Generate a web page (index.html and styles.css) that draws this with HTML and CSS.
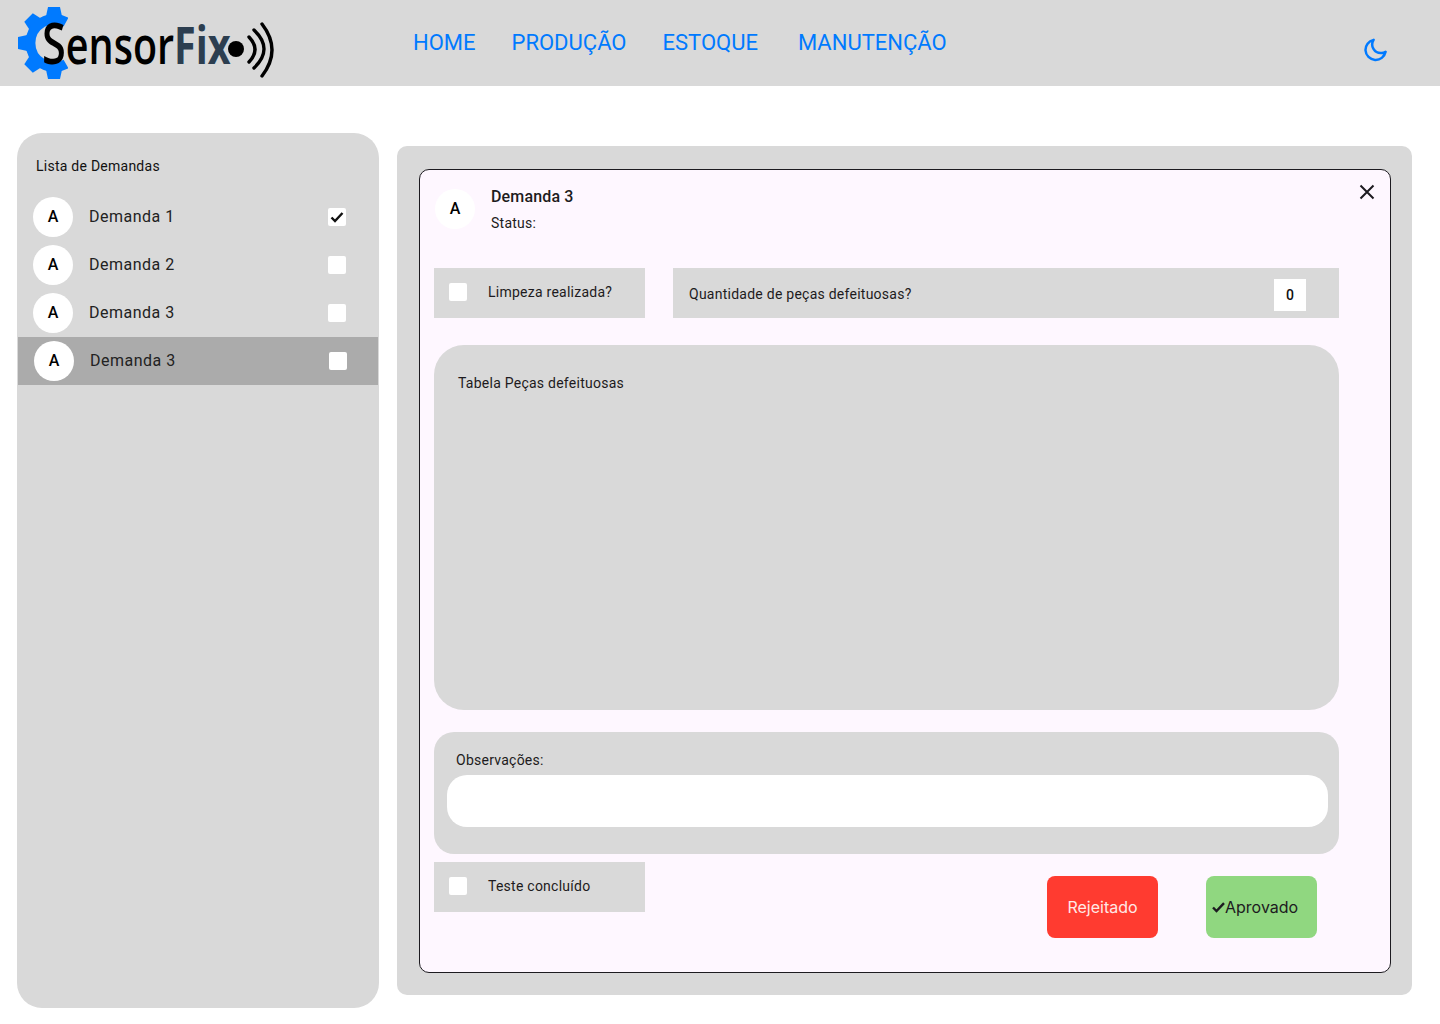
FILE: index.html
```html
<!DOCTYPE html>
<html lang="pt-BR">
<head>
    <meta charset="UTF-8">
    <meta name="viewport" content="width=device-width, initial-scale=1.0">
    <title>SensorFix</title>
    <link rel="stylesheet" href="styles.css">
</head>
<body>

    <header class="topbar">
        <div class="logo">
            <svg class="logo-gear" width="50" height="74" viewBox="0 0 50 74">
                <g fill="#007aff">
                    <polygon points="30,0 42,0 45,14 27,14"/>
                    <polygon points="30,0 42,0 45,14 27,14" transform="rotate(-45 36 36)"/>
                    <polygon points="30,0 42,0 45,14 27,14" transform="rotate(-90 36 36)"/>
                    <polygon points="30,0 42,0 45,14 27,14" transform="rotate(-135 36 36)"/>
                    <polygon points="30,0 42,0 45,14 27,14" transform="rotate(180 36 36)"/>
                </g>
                <path fill="none" stroke="#007aff" stroke-width="10" d="M48 15A24 24 0 1 0 48 57"/>
            </svg>
            <span class="logo-text"><span class="logo-s">S</span>ensor<span class="logo-fix">Fix</span></span>
            <svg class="logo-signal" width="48" height="60" viewBox="0 0 48 60">
                <circle cx="9" cy="29" r="8" fill="#000"/>
                <g fill="none" stroke="#000" stroke-width="3.4" stroke-linecap="round">
                    <path d="M22 17Q34 29.5 22 42"/>
                    <path d="M27 10Q47 29 27 48"/>
                    <path d="M35 4Q55 30 35 56"/>
                </g>
            </svg>
        </div>
        <nav class="menu">
            <a href="#">HOME</a>
            <a href="#">PRODUÇÃO</a>
            <a href="#">ESTOQUE</a>
            <a class="menu-last" href="#">MANUTENÇÃO</a>
        </nav>
        <svg class="moon" width="24" height="24" viewBox="0 0 26 26">
            <path fill="none" stroke="#007aff" stroke-width="2.7" stroke-linejoin="round" d="M11.5 2a11 11 0 1 0 13 13 8.6 8.6 0 0 1-4.5 1.3A9.3 9.3 0 0 1 11.5 2z"/>
        </svg>
    </header>

    <main class="content">
        <aside class="sidebar">
            <h2 class="sidebar-title">Lista de Demandas</h2>
            <ul class="demand-list">
                <li class="demand">
                    <span class="avatar">A</span>
                    <span class="demand-name">Demanda 1</span>
                    <span class="box">
                        <svg width="14" height="12" viewBox="0 0 14 12"><path fill="none" stroke="#111" stroke-width="2.4" d="M1.5 6.5l3.5 3.5 7.5-8"/></svg>
                    </span>
                </li>
                <li class="demand">
                    <span class="avatar">A</span>
                    <span class="demand-name">Demanda 2</span>
                    <span class="box"></span>
                </li>
                <li class="demand">
                    <span class="avatar">A</span>
                    <span class="demand-name">Demanda 3</span>
                    <span class="box"></span>
                </li>
                <li class="demand selected">
                    <span class="avatar">A</span>
                    <span class="demand-name">Demanda 3</span>
                    <span class="box"></span>
                </li>
            </ul>
        </aside>

        <section class="panel">
            <div class="modal">
                <svg class="close" width="16" height="16" viewBox="0 0 16 16">
                    <path stroke="#1d1b20" stroke-width="2" d="M1.5 1.5l13 13M14.5 1.5l-13 13"/>
                </svg>

                <div class="modal-head">
                    <span class="avatar">A</span>
                    <div>
                        <div class="modal-title">Demanda 3</div>
                        <div class="modal-status">Status:</div>
                    </div>
                </div>

                <div class="fields">
                    <div class="check-field">
                        <span class="box"></span>
                        <span>Limpeza realizada?</span>
                    </div>
                    <div class="qty-field">
                        <span>Quantidade de peças defeituosas?</span>
                        <span class="qty-value">0</span>
                    </div>
                </div>

                <div class="parts-table">Tabela Peças defeituosas</div>

                <div class="notes">
                    <div class="notes-label">Observações:</div>
                    <div class="notes-input"></div>
                </div>

                <div class="modal-foot">
                    <div class="check-field">
                        <span class="box"></span>
                        <span>Teste concluído</span>
                    </div>
                    <div class="actions">
                        <button class="btn btn-reject" type="button">Rejeitado</button>
                        <button class="btn btn-approve" type="button">
                            <svg width="13" height="11" viewBox="0 0 13 11"><path fill="none" stroke="#1d1b20" stroke-width="2.4" d="M1 5.5l3.5 3.5L12 1.2"/></svg>Aprovado
                        </button>
                    </div>
                </div>
            </div>
        </section>
    </main>

</body>
</html>
```

FILE: styles.css
```css
/* Global Styles */
* {
    box-sizing: border-box;
    margin: 0;
    padding: 0;
}
body {
    font-family: Roboto, Arial, sans-serif;
    background: #fff;
    color: #1d1b20;
    height: 1024px;
    overflow: hidden;
}

/* Top bar */
.topbar {
    display: flex;
    align-items: flex-start;
    height: 86px;
    background-color: #d9d9d9;
}
.logo {
    display: flex;
    align-items: flex-start;
    flex: none;
    width: 396px;
    height: 86px;
    padding: 7px 0 0 18px;
}
.logo-gear {
    flex: none;
}
.logo-text {
    flex: none;
    width: 185px;
    margin-left: -26px;
    font-family: "Open Sans", Arial, sans-serif;
    font-size: 52px;
    font-weight: 600;
    line-height: 70px;
    color: #000;
    white-space: nowrap;
    transform: scaleX(0.76);
    transform-origin: left center;
}
.logo-s {
    font-size: 57px;
}
.logo-fix {
    color: #2c3e50;
    font-weight: 700;
}
.logo-signal {
    flex: none;
    margin-top: 13px;
}
.menu {
    display: flex;
    flex: none;
    gap: 36px;
    width: 950px;
    padding: 29px 0 0 17px;
}
.menu a {
    font-size: 22px;
    line-height: 28px;
    color: #007aff;
    text-decoration: none;
}
.menu .menu-last {
    margin-left: 4px;
}
.moon {
    flex: none;
    margin-top: 38px;
    margin-left: 17px;
}

/* Page content */
.content {
    display: flex;
    align-items: flex-start;
    padding: 47px 28px 0 17px;
    gap: 18px;
}

/* Left list */
.sidebar {
    width: 362px;
    height: 875px;
    padding: 0 1px;
    background-color: #d9d9d9;
    border-radius: 25px;
}
.sidebar-title {
    font-size: 14px;
    font-weight: 400;
    line-height: 20px;
    letter-spacing: 0.25px;
    padding: 23px 0 17px 18px;
    color: #111;
}
.demand-list {
    list-style: none;
}
.demand {
    display: flex;
    align-items: center;
    height: 48px;
    padding-left: 15px;
}
.demand-name {
    flex: 1;
    margin-left: 16px;
    padding-bottom: 2px;
    font-size: 16px;
    letter-spacing: 0.5px;
    color: #222;
}
.demand .box {
    margin-right: 32px;
}
.demand.selected {
    background-color: #ababab;
    padding-left: 16px;
}
.demand.selected .box {
    margin-right: 31px;
}
.avatar {
    flex: none;
    display: flex;
    align-items: center;
    justify-content: center;
    width: 40px;
    height: 40px;
    padding-bottom: 2px;
    border-radius: 50%;
    background-color: #fff;
    color: #000;
    font-size: 16px;
    font-weight: 500;
}
.box {
    flex: none;
    display: flex;
    align-items: center;
    justify-content: center;
    width: 18px;
    height: 18px;
    border-radius: 2px;
    background-color: #fff;
}

/* Right panel */
.panel {
    width: 1015px;
    height: 849px;
    margin-top: 13px;
    padding: 23px 21px 22px 22px;
    background-color: #d9d9d9;
    border-radius: 10px;
}
.modal {
    position: relative;
    height: 804px;
    padding: 19px 51px 0 14px;
    background-color: #fef7ff;
    border: 1px solid #1d1b20;
    border-radius: 10px;
}
.close {
    position: absolute;
    top: 14px;
    right: 15px;
}
.modal-head {
    display: flex;
    gap: 16px;
    height: 79px;
    padding-left: 1px;
}
.modal-title {
    font-size: 16px;
    font-weight: 500;
    line-height: 16px;
    letter-spacing: 0.15px;
}
.modal-status {
    font-size: 14px;
    line-height: 20px;
    letter-spacing: 0.25px;
    margin-top: 8px;
}
.fields {
    display: flex;
    gap: 28px;
}
.check-field {
    display: flex;
    align-items: center;
    flex: none;
    gap: 21px;
    width: 211px;
    height: 50px;
    padding: 0 0 2px 15px;
    background-color: #d9d9d9;
    font-size: 14px;
    letter-spacing: 0.25px;
}
.qty-field {
    flex: 1;
    display: flex;
    align-items: center;
    justify-content: space-between;
    height: 50px;
    padding: 2px 33px 0 16px;
    background-color: #d9d9d9;
    font-size: 14px;
    letter-spacing: 0.25px;
}
.qty-value {
    display: flex;
    align-items: center;
    justify-content: center;
    width: 32px;
    height: 32px;
    margin-top: 2px;
    background-color: #fff;
    font-weight: 500;
    font-size: 14px;
    color: #111;
}
.parts-table {
    height: 365px;
    margin-top: 27px;
    padding: 28px 24px;
    background-color: #d9d9d9;
    border-radius: 30px;
    font-size: 14px;
    line-height: 20px;
    letter-spacing: 0.25px;
}
.notes {
    height: 122px;
    margin-top: 22px;
    padding: 18px 11px 0 13px;
    background-color: #d9d9d9;
    border-radius: 20px;
}
.notes-label {
    font-size: 14px;
    line-height: 20px;
    letter-spacing: 0.25px;
    padding-left: 9px;
}
.notes-input {
    height: 52px;
    margin-top: 5px;
    background-color: #fff;
    border-radius: 20px;
}
.modal-foot {
    display: flex;
    justify-content: space-between;
    margin-top: 8px;
}
.actions {
    display: flex;
    gap: 48px;
    margin-top: 14px;
    margin-right: 22px;
}
.btn {
    display: flex;
    align-items: center;
    justify-content: center;
    width: 111px;
    height: 62px;
    border: none;
    border-radius: 8px;
    font-family: Inter, Arial, sans-serif;
    font-size: 16px;
}
.btn-reject {
    background-color: #ff3b30;
    color: #ffe9e6;
}
.btn-approve {
    justify-content: flex-start;
    padding-left: 6px;
    background-color: #90d780;
    color: #1d1b20;
}
```
